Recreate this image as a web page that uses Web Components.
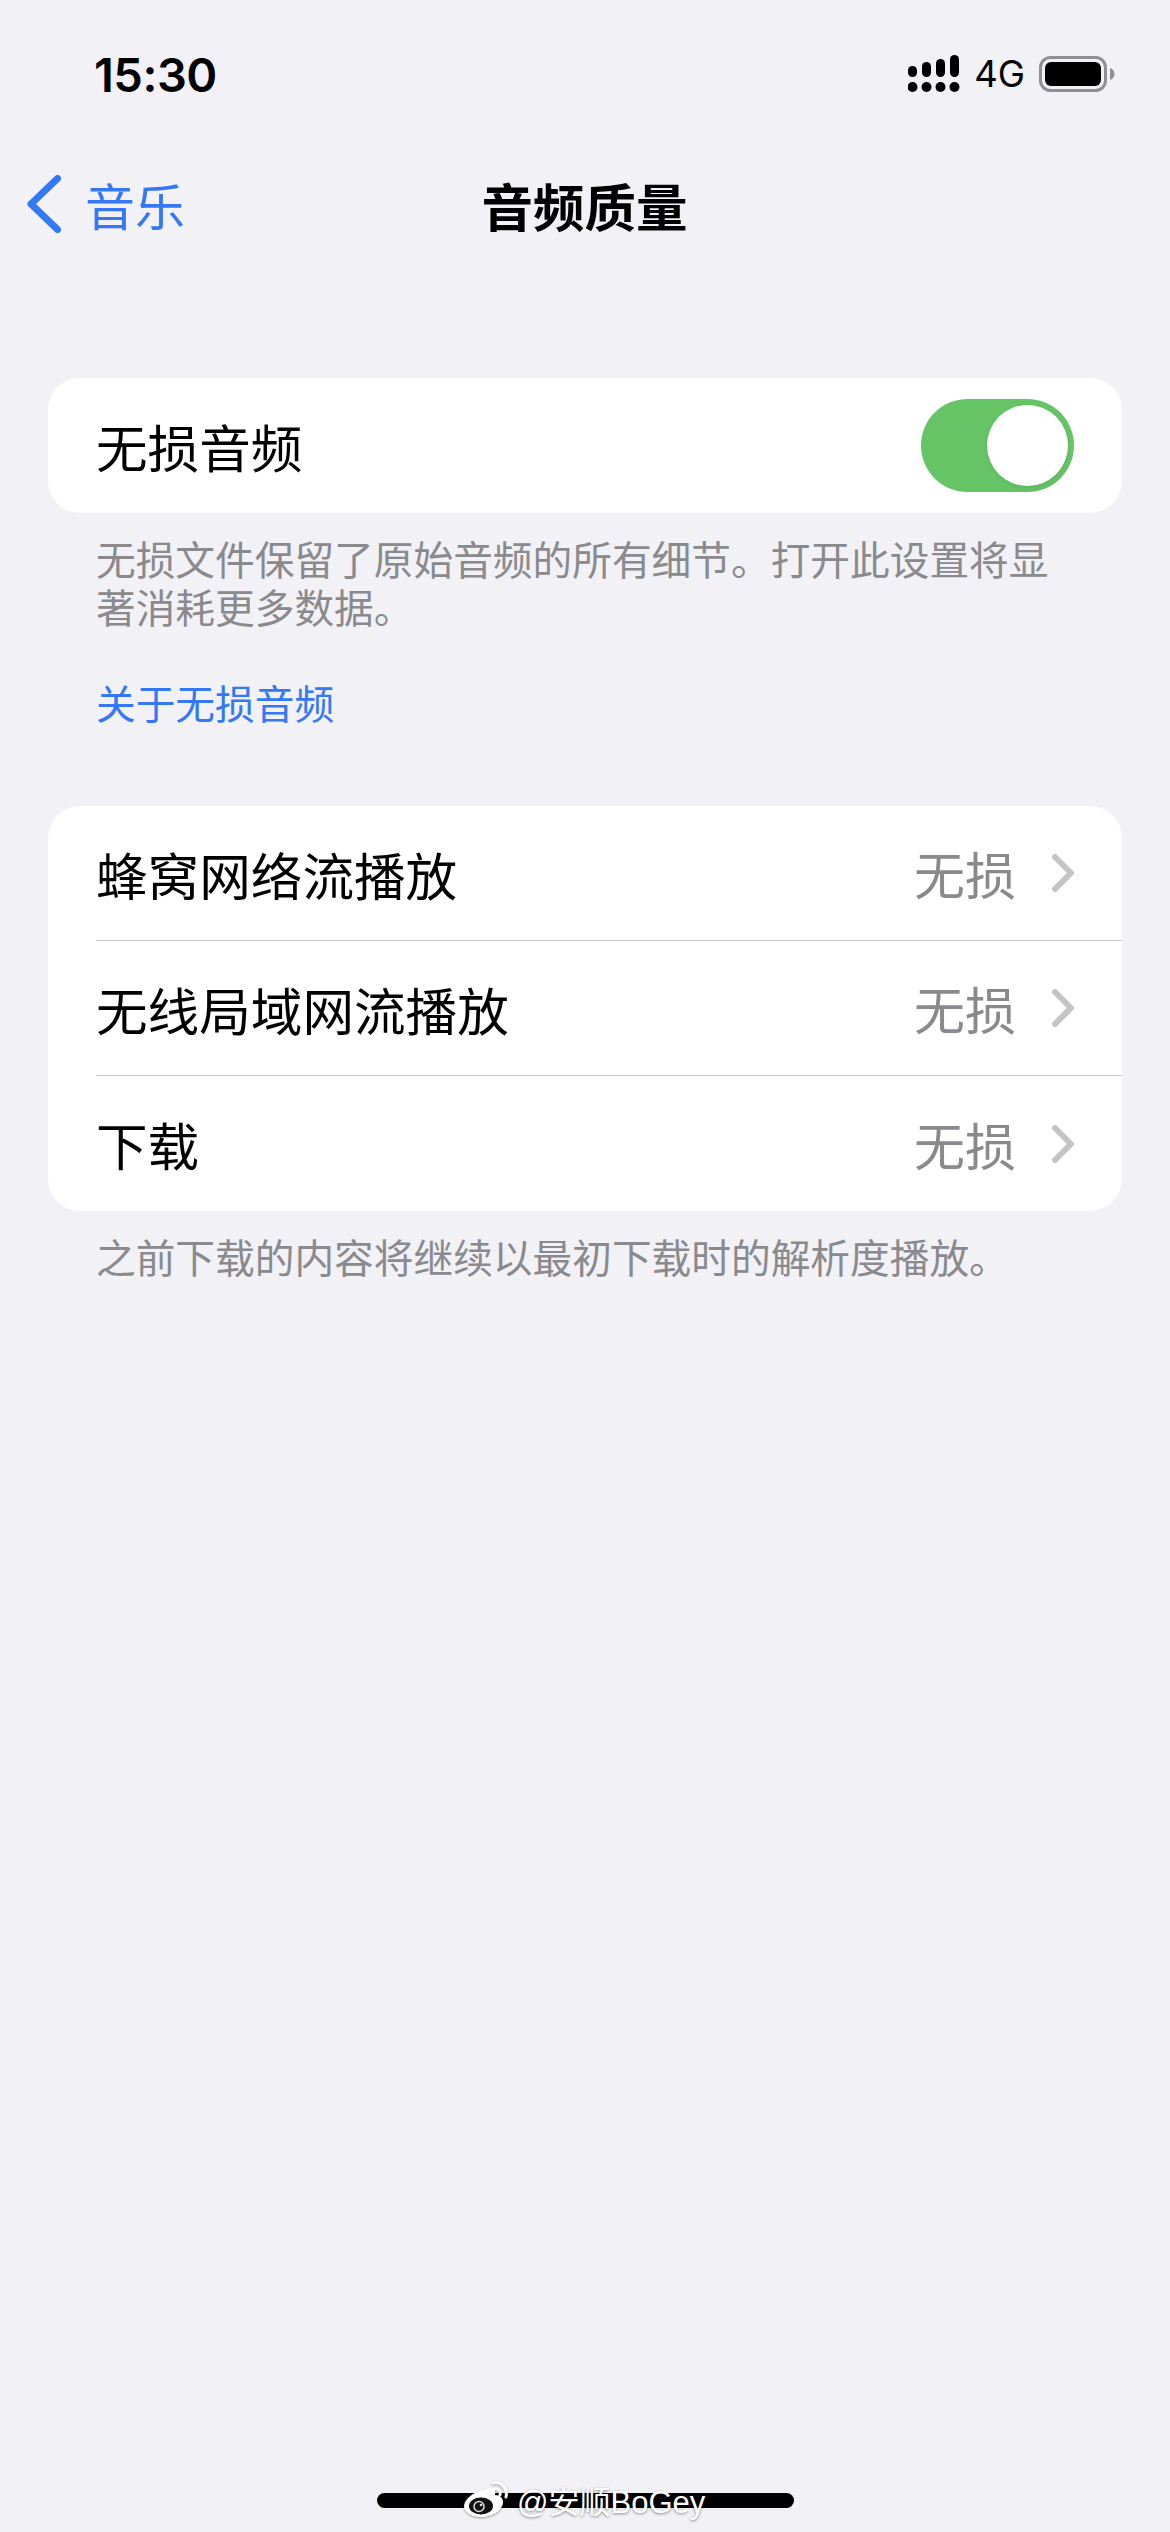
<!DOCTYPE html>
<html lang="zh-CN">
<head>
<meta charset="utf-8">
<title>音频质量</title>
<style>
    html, body { margin: 0; padding: 0; }
    body {
        width: 1170px;
        height: 2532px;
        overflow: hidden;
        display: flex;
        flex-direction: column;
        background: #f1f1f6;
        color: #000;
        font-family: "Noto Sans CJK SC", "Noto Sans", sans-serif;
    }
</style>
</head>
<body>
<status-bar time="15:30" network="4G"></status-bar>
<nav-bar back="音乐">音频质量</nav-bar>

<settings-group style="margin-top: 118px">
    <settings-row label="无损音频" last><toggle-switch slot="accessory"></toggle-switch></settings-row>
</settings-group>
<group-footer>无损文件保留了原始音频的所有细节。打开此设置将显著消耗更多数据。</group-footer>
<group-footer link>关于无损音频</group-footer>

<settings-group style="margin-top: 80px">
    <settings-row label="蜂窝网络流播放" value="无损"></settings-row>
    <settings-row label="无线局域网流播放" value="无损"></settings-row>
    <settings-row label="下载" value="无损" last></settings-row>
</settings-group>
<group-footer>之前下载的内容将继续以最初下载时的解析度播放。</group-footer>

<home-indicator mark="@安顺BoGey"></home-indicator>

<script>
(function () {

    class StatusBar extends HTMLElement {
        connectedCallback() {
            this.attachShadow({ mode: 'open' });
            this.shadowRoot.innerHTML = `
                <style>
                    :host {
                        display: flex;
                        align-items: center;
                        justify-content: space-between;
                        height: 148px;
                        box-sizing: border-box;
                        padding: 0 55px 0 94px;
                    }
                    .time {
                        font-family: Inter, "Liberation Sans", sans-serif;
                        font-size: 47px;
                        font-weight: 600;
                        letter-spacing: -0.5px;
                    }
                    .right { display: flex; align-items: center; }
                    .net {
                        font-family: Inter, "Liberation Sans", sans-serif;
                        font-size: 36.5px;
                        margin: 0 14px 0 14px;
                    }
                    svg { display: block; }
                </style>
                <span class="time">${this.getAttribute('time')}</span>
                <div class="right">
                    <svg width="52" height="38" viewBox="0 0 52 38" fill="#000">
                        <rect x="0" y="11" width="9" height="11" rx="4.5"/>
                        <rect x="14" y="7" width="9" height="15" rx="4.5"/>
                        <rect x="28" y="4" width="9" height="18" rx="4.5"/>
                        <rect x="42" y="0" width="9" height="22" rx="4.5"/>
                        <circle cx="4.5" cy="32" r="5"/>
                        <circle cx="18.5" cy="32" r="5"/>
                        <circle cx="32.5" cy="32" r="5"/>
                        <circle cx="46.5" cy="32" r="5"/>
                    </svg>
                    <span class="net">${this.getAttribute('network')}</span>
                    <svg width="76" height="36" viewBox="0 0 76 36">
                        <rect x="1.5" y="1.5" width="65" height="33" rx="10" fill="none" stroke="#909093" stroke-width="3"/>
                        <rect x="6" y="6" width="56" height="24" rx="6" fill="#000"/>
                        <path d="M71 12 C74 13 75.5 15.5 75.5 18 C75.5 20.5 74 23 71 24 Z" fill="#909093"/>
                    </svg>
                </div>
            `;
        }
    }

    class NavBar extends HTMLElement {
        connectedCallback() {
            this.attachShadow({ mode: 'open' });
            this.shadowRoot.innerHTML = `
                <style>
                    :host {
                        display: grid;
                        grid-template-columns: 1fr auto 1fr;
                        align-items: center;
                        height: 112px;
                        padding-left: 27px;
                        padding-right: 27px;
                        font-size: 51.5px;
                    }
                    .back {
                        display: flex;
                        align-items: center;
                        gap: 24px;
                        color: #3478f6;
                        font-size: 50px;
                    }
                    .title { font-weight: 700; margin-left: -1px; }
                    svg { display: block; }
                </style>
                <div class="back">
                    <svg width="34" height="58" viewBox="0 0 34 58" fill="none" stroke="#3478f6" stroke-width="7" stroke-linecap="round" stroke-linejoin="round">
                        <path d="M30.5 3.5 L4 29 L30.5 54.5"/>
                    </svg>
                    <span>${this.getAttribute('back')}</span>
                </div>
                <div class="title"><slot></slot></div>
                <div></div>
            `;
        }
    }

    class SettingsGroup extends HTMLElement {
        constructor() {
            super();
            this.attachShadow({ mode: 'open' });
            this.shadowRoot.innerHTML = `
                <style>
                    :host {
                        display: block;
                        margin: 0 48px;
                        background: #fff;
                        border-radius: 32px;
                        overflow: hidden;
                    }
                </style>
                <slot></slot>
            `;
        }
    }

    class SettingsRow extends HTMLElement {
        connectedCallback() {
            this.attachShadow({ mode: 'open' });
            const value = this.getAttribute('value');
            this.shadowRoot.innerHTML = `
                <style>
                    :host {
                        display: block;
                        padding-left: 48px;
                        font-size: 51.6px;
                    }
                    .row {
                        display: flex;
                        align-items: center;
                        justify-content: space-between;
                        height: 135px;
                        box-sizing: border-box;
                        padding-right: 48px;
                    }
                    :host(:not([last])) .row { border-bottom: 1.5px solid #c6c6c8; }
                    .right { display: flex; align-items: center; gap: 36px; color: #8a8a8e; }
                    .value { font-size: 51px; }
                    svg { display: block; }
                </style>
                <div class="row">
                    <span>${this.getAttribute('label')}</span>
                    <div class="right">
                        ${value ? `<span class="value">${value}</span>
                        <svg width="22" height="38" viewBox="0 0 22 38" fill="none" stroke="#c4c4c7" stroke-width="6" stroke-linecap="round" stroke-linejoin="round">
                            <path d="M3 3 L19 19 L3 35"/>
                        </svg>` : ''}
                        <slot name="accessory"></slot>
                    </div>
                </div>
            `;
        }
    }

    class ToggleSwitch extends HTMLElement {
        constructor() {
            super();
            this.attachShadow({ mode: 'open' });
            this.shadowRoot.innerHTML = `
                <style>
                    :host {
                        display: flex;
                        justify-content: flex-end;
                        align-items: center;
                        width: 153px;
                        height: 93px;
                        box-sizing: border-box;
                        padding-right: 6px;
                        margin-right: 0;
                        border-radius: 47px;
                        background: #65c466;
                    }
                    .knob {
                        width: 81px;
                        height: 81px;
                        border-radius: 50%;
                        background: #fff;
                        box-shadow: 0 2px 5px rgba(0, 0, 0, 0.08);
                    }
                </style>
                <div class="knob"></div>
            `;
        }
    }

    class GroupFooter extends HTMLElement {
        constructor() {
            super();
            this.attachShadow({ mode: 'open' });
            this.shadowRoot.innerHTML = `
                <style>
                    :host {
                        display: block;
                        width: 960px;
                        margin: 21px 0 0 96px;
                        font-size: 39.7px;
                        line-height: 48px;
                        color: #8a8a8e;
                    }
                    :host([link]) { margin-top: 48px; color: #3478f6; }
                </style>
                <slot></slot>
            `;
        }
    }

    class HomeIndicator extends HTMLElement {
        connectedCallback() {
            this.attachShadow({ mode: 'open' });
            this.shadowRoot.innerHTML = `
                <style>
                    :host {
                        display: block;
                        position: relative;
                        margin-top: auto;
                        margin-bottom: 24px;
                        height: 15px;
                    }
                    .bar {
                        width: 417px;
                        height: 15px;
                        margin: 0 auto;
                        border-radius: 8px;
                        background: #000;
                    }
                    /* weibo watermark sits on top of the bar */
                    .mark {
                        position: absolute;
                        left: 463px;
                        top: -13px;
                        display: flex;
                        align-items: center;
                        gap: 7px;
                        height: 38px;
                        color: #fff;
                        font-family: "Liberation Sans", "Noto Sans CJK SC", sans-serif;
                        font-size: 31px;
                        text-shadow: 0 1px 3px rgba(0, 0, 0, 0.45);
                        white-space: nowrap;
                    }
                    svg { display: block; filter: drop-shadow(0 1px 1px rgba(0,0,0,.35)); }
                </style>
                <div class="bar"></div>
                <div class="mark">
                    <svg width="47" height="38" viewBox="0 0 47 38">
                        <path d="M20 10 C26 7 31 7 32 11 C32.5 13 32 14 32 15 C37 15 40 18 40 22 C40 30 30 37 18 37 C8 37 1 32 1 26 C1 20 10 12 20 10 Z" fill="#fff"/>
                        <ellipse cx="18" cy="26" rx="12" ry="8.5" fill="#111"/>
                        <circle cx="16" cy="26.5" r="5" fill="none" stroke="#ddd" stroke-width="1.5"/>
                        <circle cx="18" cy="25" r="1.3" fill="#ddd"/>
                        <path d="M30 3 C38 1 45 8 43 17 M31 9 C35 8 38 11 37 15" fill="none" stroke="#fff" stroke-width="3" stroke-linecap="round"/>
                    </svg>
                    <span>${this.getAttribute('mark')}</span>
                </div>
            `;
        }
    }

    customElements.define('status-bar', StatusBar);
    customElements.define('nav-bar', NavBar);
    customElements.define('settings-group', SettingsGroup);
    customElements.define('settings-row', SettingsRow);
    customElements.define('toggle-switch', ToggleSwitch);
    customElements.define('group-footer', GroupFooter);
    customElements.define('home-indicator', HomeIndicator);

})();
</script>
</body>
</html>
